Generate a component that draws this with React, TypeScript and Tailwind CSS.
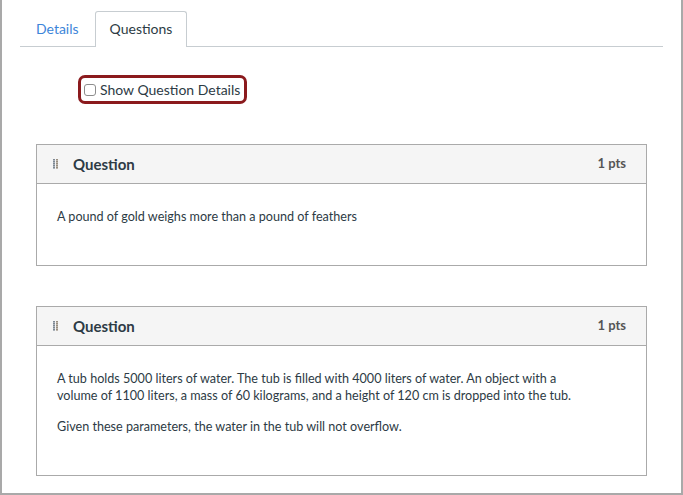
import React from "react";

function Grip() {
  return (
    <svg width="5" height="11" viewBox="0 0 5 11" className="shrink-0">
      {[0, 2, 4, 6, 8].map((y) => (
        <g key={y}>
          <rect x="0" y={y} width="2" height="1.6" fill="#7d8894" />
          <rect x="3" y={y} width="2" height="1.6" fill="#9a8f80" />
        </g>
      ))}
    </svg>
  );
}

function QuestionCard({ children }: { children: React.ReactNode }) {
  return (
    <div className="border border-[#aaaaaa] bg-white">
      <div className="flex items-center justify-between h-[39px] bg-[#f5f5f5] border-b border-[#aaaaaa] pl-4 pr-5">
        <div className="flex items-center gap-[15px]">
          <Grip />
          <span className="text-[15px] font-bold text-[#2d3b45]">Question</span>
        </div>
        <span className="text-[13px] font-bold text-[#555]">1 pts</span>
      </div>
      <div className="pl-5 pr-[60px] pt-[24px] pb-[40px] text-[12.6px] leading-[17px] text-[#2d3b45] space-y-[14px]">
        {children}
      </div>
    </div>
  );
}

export default function App() {
  return (
    <div
      className="w-[683px] h-[495px] bg-white border-l-2 border-r-2 border-b-2 border-[#a9a9a9] overflow-hidden"
      style={{ fontFamily: "Lato, 'Open Sans', sans-serif" }}
    >
      <div className="mx-[18px] pt-[11px] flex items-end border-b border-[#c7cdd1] h-[47px]">
        <div className="px-4 h-[35px] flex items-center text-[14px] text-[#3d85d9]">Details</div>
        <div className="px-[14px] h-[36px] -mb-px flex items-center pb-[2px] text-[14px] text-[#2d3b45] bg-white border border-b-0 border-[#c7cdd1] rounded-t-[3px]">
          Questions
        </div>
      </div>

      <div className="pl-[76px] pt-[28px]">
        <label className="inline-flex items-center gap-[4px] h-[29px] pl-[3px] pr-[4px] border-[3px] border-[#8b1a1d] rounded-[7px] text-[14px] text-[#2d3b45]">
          <span className="w-[12px] h-[12px] border border-[#8d8d8d] rounded-[3px] bg-white" />
          Show Question Details
        </label>
      </div>

      <div className="ml-[34px] mr-[34px] mt-[40px] flex flex-col gap-[40px]">
        <QuestionCard>
          <p>A pound of gold weighs more than a pound of feathers</p>
        </QuestionCard>
        <QuestionCard>
          <p>
            A tub holds 5000 liters of water. The tub is filled with 4000 liters of water. An object with a volume of 1100
            liters, a mass of 60 kilograms, and a height of 120 cm is dropped into the tub.
          </p>
          <p>Given these parameters, the water in the tub will not overflow.</p>
        </QuestionCard>
      </div>
    </div>
  );
}
